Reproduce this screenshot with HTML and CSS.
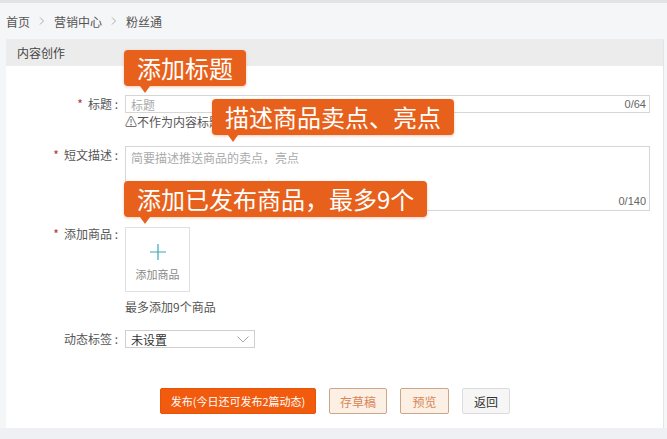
FILE: index.html
```html
<!DOCTYPE html>
<html lang="zh-CN">
<head>
  <meta charset="UTF-8" />
  <meta name="viewport" content="width=device-width, initial-scale=1.0"/>
  <title>粉丝通 - 内容创作</title>
  <link rel="stylesheet" href="styles.css">
</head>
<body>

  <div class="crumbs">
    <span>首页</span>
    <svg class="sep" width="6" height="8" viewBox="0 0 6 8"><path d="M1 0.5 L4.5 4 L1 7.5" fill="none" stroke="#aaa" stroke-width="1"/></svg>
    <span>营销中心</span>
    <svg class="sep" width="6" height="8" viewBox="0 0 6 8"><path d="M1 0.5 L4.5 4 L1 7.5" fill="none" stroke="#aaa" stroke-width="1"/></svg>
    <span>粉丝通</span>
  </div>

  <div class="card">
    <div class="card-head">内容创作</div>

    <div class="card-body">
      <div class="row">
        <label class="lbl"><i class="req">*</i>标题 :</label>
        <div class="field">
          <div class="input">
            <span class="ph">标题</span>
            <span class="count">0/64</span>
          </div>
          <div class="hint">⚠不作为内容标题</div>
        </div>
      </div>

      <div class="row">
        <label class="lbl"><i class="req">*</i>短文描述 :</label>
        <div class="field">
          <div class="textarea">
            <span class="ph">简要描述推送商品的卖点，亮点</span>
            <span class="count">0/140</span>
          </div>
        </div>
      </div>

      <div class="row">
        <label class="lbl lbl-top"><i class="req">*</i>添加商品 :</label>
        <div class="field">
          <div class="add-box">
            <svg width="18" height="18" viewBox="0 0 18 18"><path d="M9 1 V17 M1 9 H17" stroke="#3aa5b4" stroke-width="1.2" fill="none"/></svg>
            <span>添加商品</span>
          </div>
          <div class="note">最多添加9个商品</div>
        </div>
      </div>

      <div class="row">
        <label class="lbl">动态标签 :</label>
        <div class="field">
          <div class="select">
            <span>未设置</span>
            <svg width="12" height="7" viewBox="0 0 12 7"><path d="M0.5 0.5 L6 6 L11.5 0.5" fill="none" stroke="#aaa" stroke-width="1"/></svg>
          </div>
        </div>
      </div>

      <div class="actions">
        <button class="btn publish">发布(今日还可发布2篇动态)</button>
        <button class="btn soft draft">存草稿</button>
        <button class="btn soft preview">预览</button>
        <button class="btn plain">返回</button>
      </div>
    </div>

    <!-- 提示气泡 -->
    <div class="tip tip-title">添加标题</div>
    <div class="tip tip-desc">描述商品卖点、亮点</div>
    <div class="tip tip-goods">添加已发布商品，最多9个</div>
  </div>

  <div class="foot"></div>

</body>
</html>
```

FILE: styles.css
```css
body {
  margin: 0;
  font-family: "Noto Sans CJK SC", "Noto Sans", sans-serif;
  font-size: 12px;
  color: #555;
  background-color: #f5f6f8;
  border-top: 3px solid #e2e3e5;
}
.crumbs {
  display: flex;
  align-items: center;
  gap: 7px;
  height: 36px;
  padding-left: 6px;
  color: #555;
}
.crumbs .sep {
  margin: 0 2px;
}
.card {
  position: relative;
  margin: 0 3px 0 6px;
  background: #fff;
  border-right: 1px solid #e4e4e4;
}
.card-head {
  height: 27px;
  line-height: 27px;
  padding-left: 11px;
  background: #ececec;
  color: #444;
}
.card-body {
  padding: 29px 13px 14px 0;
}
.row {
  display: grid;
  grid-template-columns: 112px 1fr;
  column-gap: 7px;
  margin-bottom: 16px;
}
.lbl {
  text-align: right;
  line-height: 18px;
  color: #555;
}
.lbl-top {
  line-height: 14px;
}
.req {
  font-style: normal;
  color: #b8323a;
  margin-right: 5px;
}
.input {
  display: flex;
  justify-content: space-between;
  align-items: center;
  height: 16px;
  border: 1px solid #d6d6d6;
  padding: 0 3px 0 5px;
}
.ph {
  color: #aaa;
}
.count {
  color: #666;
  font-size: 11px;
  font-family: "Liberation Sans", Arial, sans-serif;
}
.hint {
  margin-top: 1px;
  line-height: 16px;
  color: #555;
}
.textarea {
  display: flex;
  flex-direction: column;
  justify-content: space-between;
  height: 58px;
  border: 1px solid #d6d6d6;
  padding: 2px 3px 3px 5px;
}
.textarea .count {
  align-self: flex-end;
}
.add-box {
  display: flex;
  flex-direction: column;
  align-items: center;
  box-sizing: border-box;
  width: 65px;
  height: 65px;
  border: 1px solid #e0e0e0;
  padding-top: 15px;
  color: #888;
  font-size: 11px;
}
.add-box span {
  margin-top: 5px;
}
.note {
  margin-top: 8px;
  line-height: 14px;
  color: #555;
}
.select {
  display: flex;
  justify-content: space-between;
  align-items: center;
  width: 118px;
  height: 16px;
  border: 1px solid #cfcfcf;
  padding: 0 5px 0 5px;
  color: #333;
}
.actions {
  display: flex;
  gap: 13px;
  padding-left: 154px;
  margin-top: 40px;
}
.btn {
  height: 26px;
  padding: 0;
  font-family: inherit;
  font-size: 12px;
  border-radius: 2px;
  white-space: nowrap;
  cursor: pointer;
}
.publish {
  width: 156px;
  font-size: 11px;
  background: #f25b0e;
  border: 1px solid #e65408;
  color: #fff;
}
.soft {
  background: #fcefe4;
  border: 1px solid #caa68a;
  color: #d98555;
}
.draft {
  width: 58px;
}
.preview {
  width: 49px;
}
.plain {
  width: 48px;
  background: #f6f6f6;
  border: 1px solid #dcdcdc;
  color: #333;
}
.foot {
  height: 11px;
  background: #eef0f3;
}
.tip {
  position: absolute;
  height: 36px;
  line-height: 36px;
  padding: 0 13px;
  background: #e8611c;
  color: #fff;
  font-size: 24px;
  border-radius: 4px;
  box-shadow: 0 1px 3px rgba(232, 97, 28, 0.35);
  white-space: nowrap;
}
.tip::after {
  content: "";
  position: absolute;
  left: 16px;
  bottom: -7px;
  border-left: 5px solid transparent;
  border-right: 5px solid transparent;
  border-top: 7px solid #e8611c;
}
.tip-title {
  left: 118px;
  top: 11px;
}
.tip-desc {
  left: 206px;
  top: 60px;
}
.tip-goods {
  left: 118px;
  top: 142px;
}
```
